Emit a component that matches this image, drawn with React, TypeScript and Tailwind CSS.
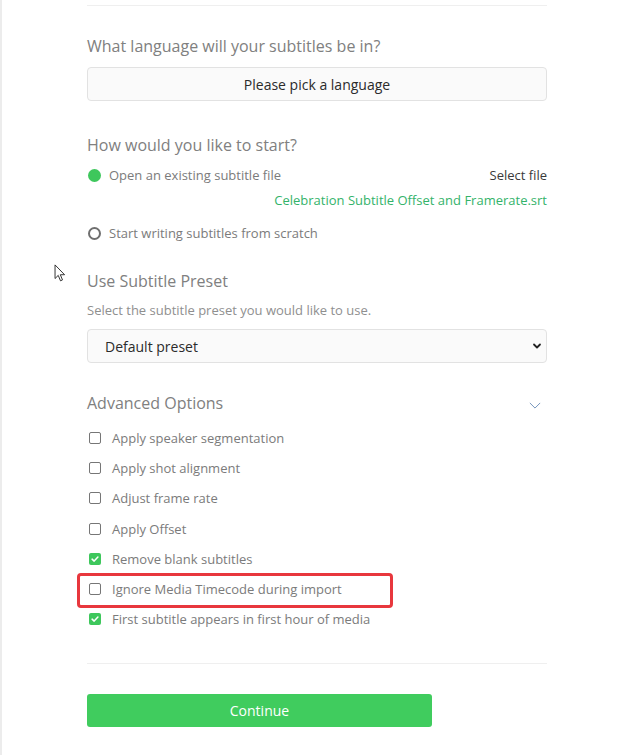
import React from "react";

const options = [
  { label: "Apply speaker segmentation", checked: false },
  { label: "Apply shot alignment", checked: false },
  { label: "Adjust frame rate", checked: false },
  { label: "Apply Offset", checked: false },
  { label: "Remove blank subtitles", checked: true },
  { label: "Ignore Media Timecode during import", checked: false, highlight: true },
  { label: "First subtitle appears in first hour of media", checked: true },
];

function Checkbox({ checked }: { checked: boolean }) {
  if (checked) {
    return (
      <span className="flex h-[12px] w-[12px] shrink-0 items-center justify-center rounded-[2px] bg-[#3ec75c]">
        <svg viewBox="0 0 12 12" className="h-[10px] w-[10px]">
          <path d="M2.5 6.2 L5 8.5 L9.5 3.6" fill="none" stroke="white" strokeWidth="1.8" strokeLinecap="round" strokeLinejoin="round" />
        </svg>
      </span>
    );
  }
  return <span className="h-[12px] w-[12px] shrink-0 rounded-[2px] border border-[#767676] bg-white" />;
}

function Cursor() {
  return (
    <svg viewBox="0 0 14 22" className="absolute left-[52px] top-[264px] h-[20px] w-[13px]">
      <path d="M1 1 L1 16 L4.5 12.5 L7 18.5 L9.2 17.5 L6.8 11.8 L11.5 11.8 Z" fill="white" stroke="#222" strokeWidth="1" strokeLinejoin="round" />
    </svg>
  );
}

export default function App() {
  return (
    <div
      className="relative h-[755px] w-[617px] overflow-hidden border-l-2 border-[#ececec] bg-white"
      style={{ fontFamily: '"Open Sans", "Noto Sans", sans-serif' }}
    >
      <Cursor />
      <div className="ml-[85px] w-[460px]">
        <div className="mt-[5px] h-px bg-[#efefef]" />

        {/* Language */}
        <h2 className="mt-[29px] text-[16px] leading-[22px] text-[#808080]">What language will your subtitles be in?</h2>
        <div className="mt-[10px] flex h-[34px] items-center justify-center rounded-[4px] border border-[#e2e2e2] bg-[#fafafa] text-[14px] text-[#2b2b2b]">
          Please pick a language
        </div>

        {/* Start */}
        <h2 className="mt-[33px] text-[16px] leading-[22px] text-[#808080]">How would you like to start?</h2>
        <div className="mt-[9px] flex items-center justify-between">
          <div className="flex items-center">
            <span className="ml-[1px] h-[13px] w-[13px] rounded-full bg-[#3ec75c]" />
            <span className="ml-[8px] text-[13px] leading-[20px] text-[#7b7b7b]">Open an existing subtitle file</span>
          </div>
          <span className="text-[13px] leading-[20px] text-[#3a3a3a]">Select file</span>
        </div>
        <div className="mt-[5px] text-right text-[13px] leading-[20px] text-[#34b36a]">
          Celebration Subtitle Offset and Framerate.srt
        </div>
        <div className="mt-[13px] flex items-center">
          <span className="ml-[1px] h-[13px] w-[13px] rounded-full border-2 border-[#6f6f6f]" />
          <span className="ml-[8px] text-[13px] leading-[20px] text-[#7b7b7b]">Start writing subtitles from scratch</span>
        </div>

        {/* Preset */}
        <h2 className="mt-[27px] text-[16px] leading-[22px] text-[#808080]">Use Subtitle Preset</h2>
        <p className="mt-[9px] text-[13px] leading-[18px] text-[#8f8f8f]">Select the subtitle preset you would like to use.</p>
        <div className="mt-[10px] flex h-[34px] items-center justify-between rounded-[4px] border border-[#e2e2e2] bg-[#fafafa] pl-[17px] pr-[4px] text-[14px] text-[#2b2b2b]">
          <span>Default preset</span>
          <svg viewBox="0 0 10 10" className="h-[10px] w-[10px]">
            <path d="M2 3.5 L5 6.5 L8 3.5" fill="none" stroke="#222" strokeWidth="1.8" strokeLinecap="round" strokeLinejoin="round" />
          </svg>
        </div>

        {/* Advanced */}
        <div className="mt-[29px] flex items-center justify-between">
          <h2 className="text-[16px] leading-[22px] text-[#808080]">Advanced Options</h2>
          <svg viewBox="0 0 14 8" className="mr-[6px] mt-[4px] h-[7px] w-[12px]">
            <path d="M1 1 L7 7 L13 1" fill="none" stroke="#6d8fb8" strokeWidth="1.1" />
          </svg>
        </div>
        <div className="mt-[9px] flex flex-col">
          {options.map((o) => (
            <div key={o.label} className="relative flex h-[30.2px] items-center pl-[2px]">
              {o.highlight && (
                <div className="absolute left-[-10px] top-[-1px] h-[35px] w-[316px] rounded-[4px] border-[3px] border-[#e8373d]" />
              )}
              <Checkbox checked={o.checked} />
              <span className="ml-[11px] text-[13px] leading-[20px] text-[#7b7b7b]">{o.label}</span>
            </div>
          ))}
        </div>

        <div className="mt-[29px] h-px bg-[#efefef]" />

        <button className="mt-[30px] flex h-[33px] w-[345px] items-center justify-center rounded-[3px] bg-[#40cc5e] text-[14px] font-medium text-white">
          Continue
        </button>
      </div>
    </div>
  );
}
